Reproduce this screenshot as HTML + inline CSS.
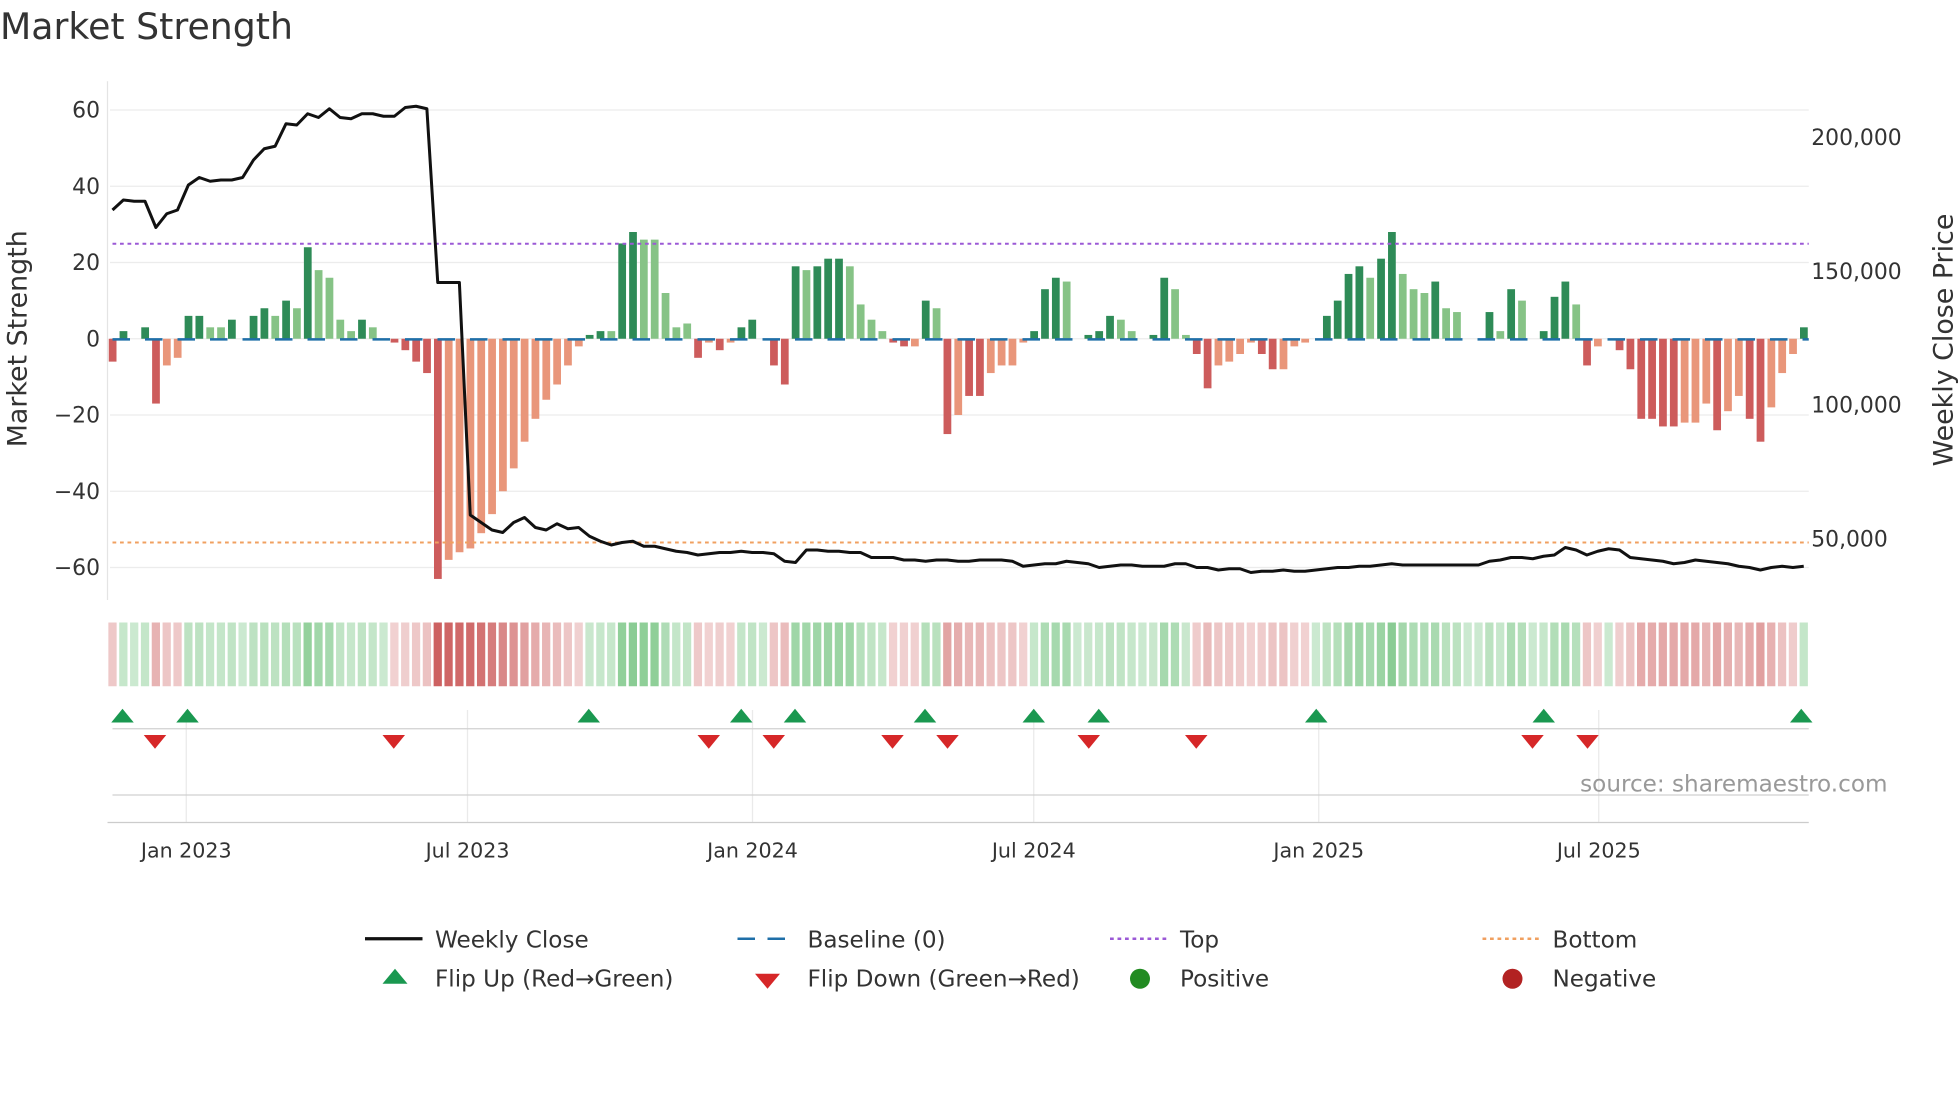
<!DOCTYPE html>
<html><head><meta charset="utf-8"><style>
html,body{margin:0;padding:0;background:#fff;}
svg{display:block;font-family:"DejaVu Sans","Liberation Sans",sans-serif;}
</style></head><body>
<svg id="s" width="1960" height="1102" viewBox="0 0 1568 881.6" xmlns="http://www.w3.org/2000/svg">
<rect width="1568" height="882" fill="#fff"/>
<text x="0" y="31" font-size="29" fill="#333">Market Strength</text>
<g id="grid" stroke="#ececec" stroke-width="1"></g>
<line x1="86" y1="65" x2="86" y2="480" stroke="#e4e4e4"/>
<g id="heat"></g>
<g id="bars"></g>
<line x1="90" y1="195" x2="1447" y2="195" stroke="#9b59d6" stroke-width="1.6" stroke-dasharray="3,3"/>
<line x1="90" y1="434" x2="1447" y2="434" stroke="#f0a060" stroke-width="1.6" stroke-dasharray="3,3"/>
<line x1="90" y1="271.5" x2="1447" y2="271.5" stroke="#1f6fa8" stroke-width="2" stroke-dasharray="14,12"/>
<polyline id="price" fill="none" stroke="#111" stroke-width="2.4" stroke-linejoin="round"/>
<g font-size="17.5" fill="#333" text-anchor="end">
<text x="80" y="94">60</text><text x="80" y="155">40</text><text x="80" y="216">20</text><text x="80" y="277">0</text>
<text x="80" y="338">−20</text><text x="80" y="399">−40</text><text x="80" y="460">−60</text>
</g>
<g font-size="17.5" fill="#333">
<text x="1449" y="116">200,000</text><text x="1449" y="223">150,000</text><text x="1449" y="330">100,000</text><text x="1449" y="437">50,000</text>
</g>
<text transform="translate(21,271) rotate(-90)" font-size="21.5" fill="#333" text-anchor="middle">Market Strength</text>
<text transform="translate(1562,272) rotate(-90)" font-size="21.5" fill="#333" text-anchor="middle">Weekly Close Price</text>
<g id="vg" stroke="#eaeaea"></g>
<line x1="90" y1="583" x2="1447" y2="583" stroke="#d0d0d0"/>
<line x1="90" y1="636" x2="1447" y2="636" stroke="#d0d0d0"/>
<line x1="86" y1="658" x2="1447" y2="658" stroke="#ccc"/>
<g id="mk"></g>
<text x="1510" y="633" font-size="18.5" fill="#999" text-anchor="end">source: sharemaestro.com</text>
<g font-size="16.5" fill="#333" text-anchor="middle">
<text x="149" y="686">Jan 2023</text><text x="374" y="686">Jul 2023</text><text x="602" y="686">Jan 2024</text>
<text x="827" y="686">Jul 2024</text><text x="1055" y="686">Jan 2025</text><text x="1279" y="686">Jul 2025</text>
</g>
<g font-size="18.5" fill="#333">
<line x1="292" y1="751" x2="338" y2="751" stroke="#111" stroke-width="2.6"/>
<text x="348" y="758">Weekly Close</text>
<line x1="590" y1="751" x2="636" y2="751" stroke="#1f6fa8" stroke-width="2" stroke-dasharray="14,10"/>
<text x="646" y="758">Baseline (0)</text>
<line x1="888" y1="751" x2="934" y2="751" stroke="#9b59d6" stroke-width="2" stroke-dasharray="3,3"/>
<text x="944" y="758">Top</text>
<line x1="1186" y1="751" x2="1232" y2="751" stroke="#f0a060" stroke-width="2" stroke-dasharray="3,3"/>
<text x="1242" y="758">Bottom</text>
<polygon points="316,775 306,787 326,787" fill="#1a9850"/>
<text x="348" y="789">Flip Up (Red→Green)</text>
<polygon points="604,779 624,779 614,791" fill="#d62728"/>
<text x="646" y="789">Flip Down (Green→Red)</text>
<circle cx="912" cy="783" r="8" fill="#228b22"/>
<text x="944" y="789">Positive</text>
<circle cx="1210" cy="783" r="8" fill="#b22222"/>
<text x="1242" y="789">Negative</text>
</g>
</svg>
<script>
var NS="http://www.w3.org/2000/svg";
function el(p,t,a){var e=document.createElementNS(NS,t);for(var k in a)e.setAttribute(k,a[k]);document.getElementById(p).appendChild(e);return e;}
var v=[-6,2,0,3,-17,-7,-5,6,6,3,3,5,0,6,8,6,10,8,24,18,16,5,2,5,3,0,-1,-3,-6,-9,-63,-58,-56,-55,-51,-46,-40,-34,-27,-21,-16,-12,-7,-2,1,2,2,25,28,26,26,12,3,4,-5,-1,-3,-1,3,5,0,-7,-12,19,18,19,21,21,19,9,5,2,-1,-2,-2,10,8,-25,-20,-15,-15,-9,-7,-7,-1,2,13,16,15,0,1,2,6,5,2,0,1,16,13,1,-4,-13,-7,-6,-4,-1,-4,-8,-8,-2,-1,0,6,10,17,19,16,21,28,17,13,12,15,8,7,0,0,7,2,13,10,0,2,11,15,9,-7,-2,0,-3,-8,-21,-21,-23,-23,-22,-22,-17,-24,-19,-15,-21,-27,-18,-9,-4,3];
var c=[ 'r','g','g','g','r','s','s','g','g','l','l','g','g','g','g','l','g','l','g','l','l','l','l','g','l','g','r','r','r','r','r','s','s','s','s','s','s','s','s','s','s','s','s','s','g','g','l','g','g','l','l','l','l','l','r','s','r','s','g','g','g','r','r','g','l','g','g','g','l','l','l','l','r','r','s','g','l','r','s','r','r','s','s','s','s','g','g','g','l','g','g','g','g','l','l','g','g','g','l','l','r','r','s','s','s','s','r','r','s','s','s','g','g','g','g','g','l','g','g','l','l','l','g','l','l','g','g','g','l','g','l','g','g','g','g','l','r','s','s','r','r','r','r','r','r','s','s','s','r','s','s','r','r','s','s','s','g'];
var col={g:'#2e8b57',l:'#86c386',r:'#cd5c5c',s:'#e9967a'};
var p=[168,160,161,161,182,171,168,148,142,145,144,144,142,128,119,117,99,100,91,94,87,94,95,91,91,93,93,86,85,87,226,226,226,412,418,424,426,418,414,422,424,419,423,422,429,433,436,434,433,437,437,439,441,442,444,443,442,442,441,442,442,443,449,450,440,440,441,441,442,442,446,446,446,448,448,449,448,448,449,449,448,448,448,449,453,452,451,451,449,450,451,454,453,452,452,453,453,453,451,451,454,454,456,455,455,458,457,457,456,457,457,456,455,454,454,453,453,452,451,452,452,452,452,452,452,452,452,449,448,446,446,447,445,444,438,440,444,441,439,440,446,447,448,449,451,450,448,449,450,451,453,454,456,454,453,454,453];
var step=(1443-90)/156,pts=[];
[88,149,210,271,332,393,454].forEach(function(y){el('grid','line',{x1:88,y1:y,x2:1447,y2:y});});
[149,374,602,827,1055,1279].forEach(function(x){el('vg','line',{x1:x,y1:568,x2:x,y2:658});});
for(var i=0;i<v.length;i++){
 var x=90+i*step,val=v[i],y0=271,h=Math.abs(val)*3.05;
 if(val!==0) el('bars','rect',{x:x-3,y:val>0?y0-h:y0,width:6.2,height:h,fill:col[c[i]]});
 var hc=val>=0?'rgba(70,175,85,'+(0.28+Math.min(1,Math.abs(val)/28)*0.35)+')':'rgba(200,80,80,'+(0.25+Math.min(1,Math.abs(val)/60)*0.65)+')';
 el('heat','rect',{x:x-3.3,y:498,width:6.6,height:51,fill:hc});
 pts.push(x.toFixed(1)+','+(p[i]||453));
}
document.getElementById('price').setAttribute('points',pts.join(' '));
[98,150,471,593,636,740,827,879,1053,1235,1441].forEach(function(x){el('mk','polygon',{points:(x)+',567 '+(x-9)+',578 '+(x+9)+',578',fill:'#1a9850'});});
[124,315,567,619,714,758,871,957,1226,1270].forEach(function(x){el('mk','polygon',{points:(x-9)+',588 '+(x+9)+',588 '+x+',599',fill:'#d62728'});});
</script>
</body></html>
